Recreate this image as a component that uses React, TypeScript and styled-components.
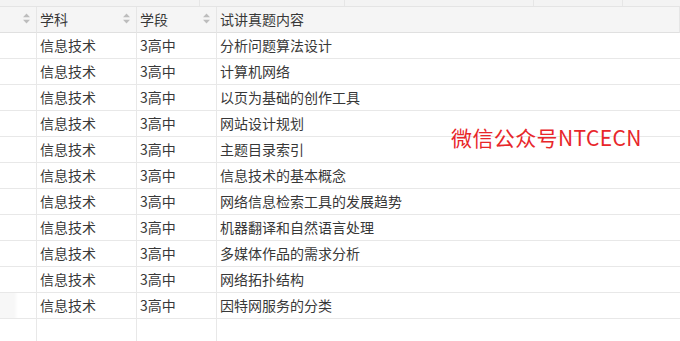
import React from "react";
import styled, { createGlobalStyle } from "styled-components";

const Global = createGlobalStyle`
  html, body { margin: 0; padding: 0; background: #fff; }
  body { font-family: "Noto Sans CJK SC", "Noto Sans", sans-serif; overflow: hidden; }
`;

const Page = styled.div`
  position: relative;
  width: 680px;
  height: 341px;
  overflow: hidden;
  background: #fff;
`;

const TopStrip = styled.div`
  display: grid;
  grid-template-columns: 200px 145px 189px 89px 1fr;
  height: 6px;
  background: #f3f3f3;
  border-bottom: 1px solid #e4e4e4;
`;

const StripCell = styled.div`
  border-right: 1px solid #e6e6e6;
  &:last-child { border-right: none; }
`;

const Grid = styled.div`
  display: grid;
  grid-template-columns: 37px 100px 80px 1fr;
  grid-auto-rows: 26px;
`;

const HeadCell = styled.div`
  display: flex;
  align-items: center;
  justify-content: space-between;
  box-sizing: border-box;
  padding: 0 6px 2px 3px;
  background: #f5f5f5;
  border-right: 1px solid #e6e6e6;
  border-bottom: 1px solid #e0e0e0;
  font-size: 14px;
  line-height: 20px;
  color: #383838;
  white-space: nowrap;
  &:last-child { border-right: none; }
`;

const Cell = styled.div<{ $shade?: boolean }>`
  display: flex;
  align-items: center;
  box-sizing: border-box;
  padding: 0 0 2px 3px;
  border-right: 1px solid #e8e8e8;
  border-bottom: 1px solid #e8e8e8;
  font-size: 14px;
  line-height: 20px;
  color: #383838;
  white-space: nowrap;
  background: ${(p) =>
    p.$shade ? "linear-gradient(to right, #f7f7f7 0, #f7f7f7 14px, #fff 18px)" : "#fff"};
  &:nth-child(4n) { border-right: none; }
`;

const Filler = styled.div`
  height: 23px;
  border-right: 1px solid #e8e8e8;
  &:last-child { border-right: none; }
`;

const FillRow = styled.div`
  display: grid;
  grid-template-columns: 37px 100px 80px 1fr;
`;

const Watermark = styled.div`
  position: absolute;
  left: 451px;
  top: 123px;
  font-size: 21px;
  line-height: 28px;
  letter-spacing: 0.4px;
  color: #e8262a;
  font-family: "Noto Sans CJK SC", sans-serif;
  white-space: nowrap;
`;

const SortIcon = () => (
  <svg width="7" height="11" viewBox="0 0 7 11" style={{ flex: "none" }}>
    <path d="M3.5 0.5 L7 4.3 L0 4.3 Z" fill="#bdbdbd" />
    <path d="M3.5 10.5 L7 6.7 L0 6.7 Z" fill="#bdbdbd" />
  </svg>
);

const topics = [
  "分析问题算法设计",
  "计算机网络",
  "以页为基础的创作工具",
  "网站设计规划",
  "主题目录索引",
  "信息技术的基本概念",
  "网络信息检索工具的发展趋势",
  "机器翻译和自然语言处理",
  "多媒体作品的需求分析",
  "网络拓扑结构",
  "因特网服务的分类",
];

export default function App() {
  return (
    <Page>
      <Global />
      <TopStrip>
        <StripCell />
        <StripCell />
        <StripCell />
        <StripCell />
        <StripCell />
      </TopStrip>
      <Grid>
        <HeadCell>
          <span />
          <SortIcon />
        </HeadCell>
        <HeadCell>
          <span>学科</span>
          <SortIcon />
        </HeadCell>
        <HeadCell>
          <span>学段</span>
          <SortIcon />
        </HeadCell>
        <HeadCell>
          <span>试讲真题内容</span>
        </HeadCell>
        {topics.map((t, i) => (
          <React.Fragment key={i}>
            <Cell $shade={i === topics.length - 1} />
            <Cell>信息技术</Cell>
            <Cell>3高中</Cell>
            <Cell>{t}</Cell>
          </React.Fragment>
        ))}
      </Grid>
      <FillRow>
        <Filler />
        <Filler />
        <Filler />
        <Filler />
      </FillRow>
      <Watermark>微信公众号NTCECN</Watermark>
    </Page>
  );
}
